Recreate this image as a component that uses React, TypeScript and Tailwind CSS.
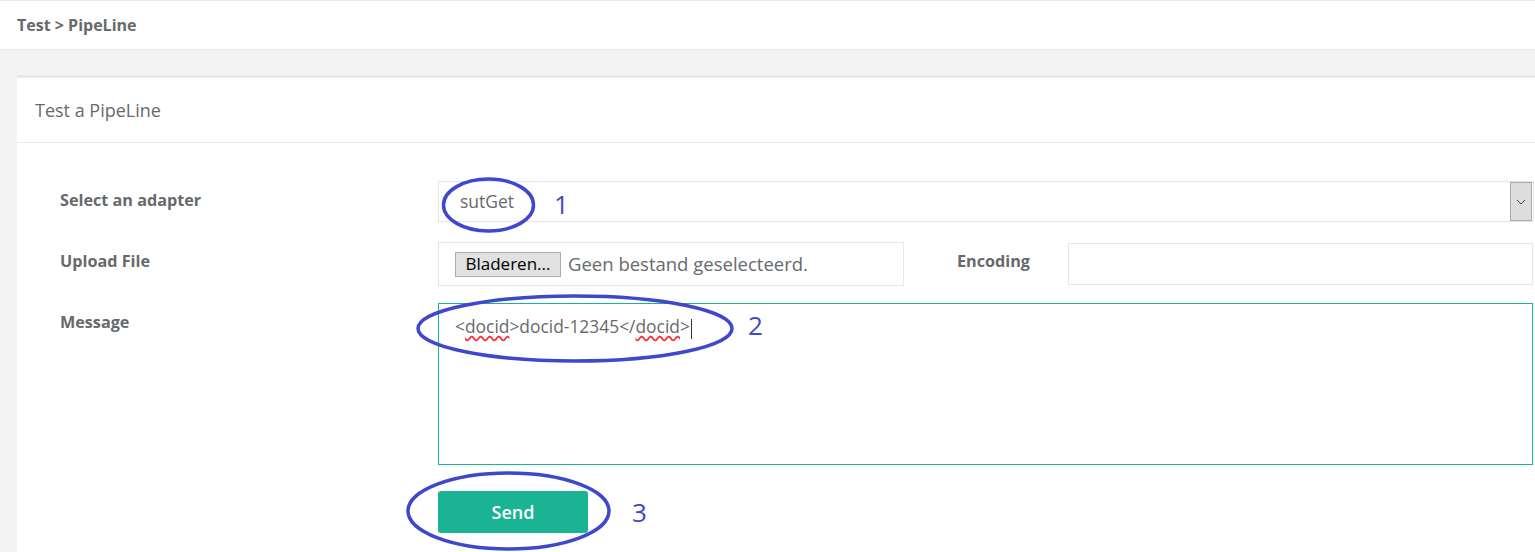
import React from 'react';

const Annotations: React.FC = () => (
  <svg className="absolute left-0 top-0 pointer-events-none" width="1535" height="552">
    <g fill="none" stroke="#3f48cc" strokeWidth="3.5">
      <ellipse cx="488.5" cy="205" rx="45" ry="26" />
      <ellipse cx="575" cy="328.5" rx="157" ry="32.5" />
      <ellipse cx="508.5" cy="511" rx="100.5" ry="38" />
    </g>
    <g fill="#3f48cc" fontFamily="'Open Sans', 'Noto Sans', sans-serif" fontSize="26">
      <text x="561.5" y="214" textAnchor="middle">1</text>
      <text x="755.5" y="335" textAnchor="middle">2</text>
      <text x="639.5" y="522" textAnchor="middle">3</text>
    </g>
  </svg>
);

const App: React.FC = () => {
  return (
    <div className="relative w-[1535px] h-[552px] overflow-hidden bg-[#f3f3f4] font-['Open_Sans','Noto_Sans',sans-serif] text-[#676a6c]">
      {/* breadcrumb bar */}
      <div className="h-[50px] bg-white border-t border-b border-[#e7eaec] flex items-center px-[17px]">
        <span className="text-[16px] font-bold">Test &gt; PipeLine</span>
      </div>

      <div className="pl-[17px] pt-[25px]">
        <div className="bg-white border-t-[3px] border-[#e7eaec]">
          <div className="h-[65px] border-b border-[#e7eaec] flex items-center px-[18px]">
            <h5 className="text-[18px] font-normal">Test a PipeLine</h5>
          </div>

          <div className="pl-[43px] pr-[1px] pt-[38px]">
            {/* adapter */}
            <div className="flex items-center">
              <label className="w-[378px] pb-[3px] text-[16.2px] font-bold">Select an adapter</label>
              <div className="flex-1 h-[41px] border border-[#e5e6e7] flex items-center justify-between pl-[21px] pr-[1px]">
                <span className="text-[17.5px]">sutGet</span>
                <div className="w-[22px] h-[39px] bg-[#dddddd] border border-[#a9a9a9] flex items-center justify-center">
                  <svg width="10" height="6" viewBox="0 0 10 6" fill="none" stroke="#444" strokeWidth="1">
                    <path d="M1 1l4 4 4-4" />
                  </svg>
                </div>
              </div>
            </div>

            {/* upload */}
            <div className="flex items-center mt-[20px]">
              <label className="w-[378px] pb-[5px] text-[16.2px] font-bold">Upload File</label>
              <div className="w-[466px] h-[44px] border border-[#e5e6e7] flex items-center pl-[16px]">
                <span className="h-[25px] w-[106px] bg-[#e1e1e1] border border-[#adadad] flex items-center justify-center text-[17px] text-black">
                  Bladeren...
                </span>
                <span className="ml-[7px] text-[18.5px]">Geen bestand geselecteerd.</span>
              </div>
              <label className="ml-[53px] w-[111px] pb-[5px] text-[16.2px] font-bold">Encoding</label>
              <div className="flex-1 h-[42px] border border-[#e5e6e7] mr-[1px]" />
            </div>

            {/* message */}
            <div className="flex items-start mt-[17px]">
              <label className="w-[378px] pt-[7px] text-[16.2px] font-bold">Message</label>
              <div className="flex-1 h-[162px] border border-[#1ab394] px-[16px] pt-[9px] mr-[1px]">
                <span className="text-[17.4px]">
                  &lt;<span className="underline decoration-wavy decoration-red-500 underline-offset-2">docid</span>&gt;docid-12345&lt;/<span className="underline decoration-wavy decoration-red-500 underline-offset-2">docid</span>&gt;
                </span>
                <span className="inline-block align-middle w-px h-[20px] bg-[#333] ml-px" />
              </div>
            </div>

            {/* send */}
            <div className="pl-[378px] mt-[26px] pb-[20px]">
              <button className="w-[150px] h-[42px] bg-[#1ab394] rounded-[3px] text-white text-[18px] font-semibold">
                Send
              </button>
            </div>
          </div>
        </div>
      </div>

      <Annotations />
    </div>
  );
};

export default App;
